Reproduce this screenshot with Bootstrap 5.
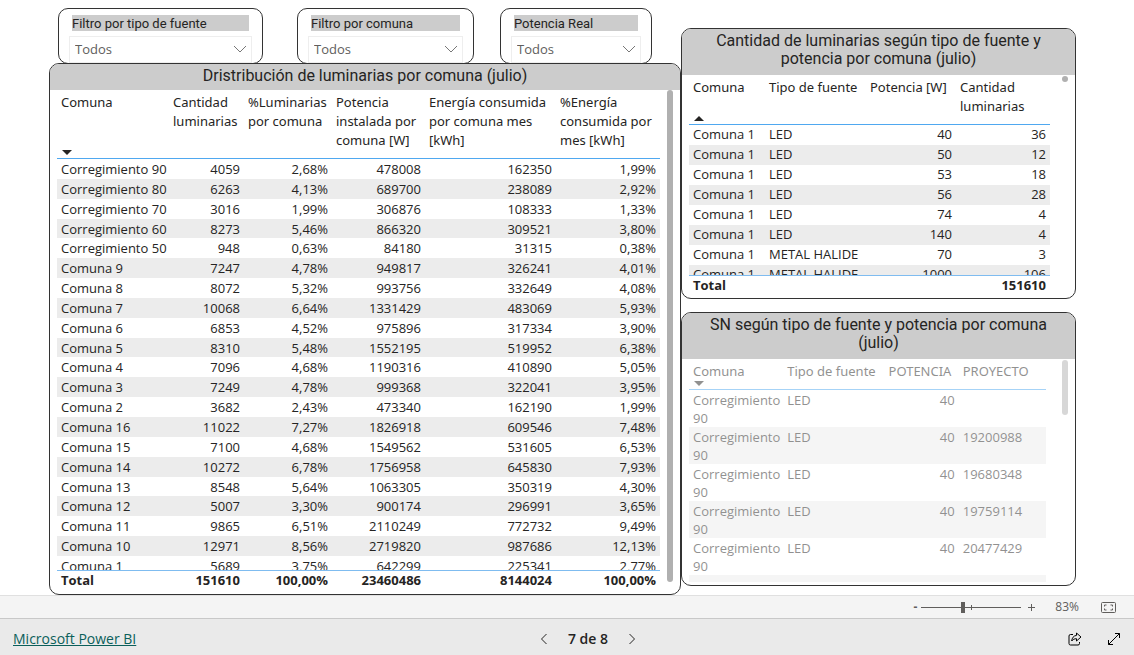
<!DOCTYPE html>
<html lang="es">
<head>
<meta charset="utf-8">
<meta name="viewport" content="width=device-width, initial-scale=1">
<title>Luminarias por comuna</title>
<link href="https://cdn.jsdelivr.net/npm/bootstrap@5.3.0/dist/css/bootstrap.min.css" rel="stylesheet">
<style>
  body { font-family: "Open Sans", "Noto Sans", sans-serif; font-size: 13px; line-height: 20px; color: #252423; background: #fff; }
  .report { padding: 8px 61px 0 49px; min-height: 0; }
  .report-grid { display: grid; grid-template-columns: 8fr 5fr; height: 100%; }
  .report-column { min-height: 0; }
  .filters { padding-left: 9px; padding-right: 27px; }
  .filter { border: 1px solid #333; border-radius: 10px; height: 56px; padding: 6px 10px 0; margin-bottom: -1px; overflow: hidden; }
  .filter-source { flex: 0 1 205px; }
  .filter-area { flex: 0 1 177px; margin-left: 34px; }
  .filter-power { flex: 0 1 152px; margin-left: 26px; }
  .filter label { display: block; margin: 0 3px 5px; padding-top: 1px; background: #ccc; font-family: Roboto, sans-serif; font-size: 13px; line-height: 15px; }
  .filter select { height: 27px; padding: 1px 24px 3px 5px; font-size: 13px; line-height: 20px; color: #605e5c; border: 1px solid #eee; border-radius: 0;
    background-size: 14px 8px; background-position: right 4px top 8px;
    background-image: url("data:image/svg+xml,%3Csvg xmlns='http://www.w3.org/2000/svg' viewBox='0 0 14 8'%3E%3Cpath d='M1 1l6 6 6-6' fill='none' stroke='%23777'/%3E%3C/svg%3E"); }
  .panel { border: 1px solid #333; border-radius: 10px; background: #fff; overflow: hidden; min-height: 0; }
  .panel-title { margin: 0; background: #ccc; font-family: Roboto, sans-serif; font-size: 16px; font-weight: 400; line-height: 18px; text-align: center; white-space: nowrap; }
  .side { padding: 20px 0 9px; gap: 13px; }
  .panel-main .panel-title { padding: 3px 8px 5px; }
  .side .panel-title { padding: 3px 8px 7px; }
  .panel-count { flex: 271 1 0; }
  .panel-sn { flex: 274 1 0; }
  .panel-body { padding: 0 7px 3px; min-height: 0; }
  .panel-main .panel-body { gap: 7px; }
  .panel-count .panel-body { gap: 12px; }
  .panel-sn .panel-body { gap: 16px; opacity: .5; }
  .sheet { min-width: 0; }
  .viewport { overflow: hidden; min-height: 0; flex: 1 1 0; }
  .thumb { width: 6px; border-radius: 3px; background: #b0b0b0; flex: none; }
  .thumb-long { margin-bottom: 9px; }
  .thumb-dot { height: 6px; margin-top: 1px; }
  .thumb-short { height: 55px; margin-top: 1px; }
  .grid-data { table-layout: fixed; width: 100%; border-collapse: separate; border-spacing: 0; }
  .grid-data th, .grid-data td { padding: 0 4px; vertical-align: top; white-space: nowrap; }
  .grid-data thead th { font-family: "Noto Sans", sans-serif; font-weight: 400; line-height: 19px; border-bottom: 1px solid #4fa8f0; position: relative; }
  .grid-data tbody tr:nth-child(even) { background: #ececec; }
  .grid-data tbody td { line-height: 19px; }
  .n { text-align: right; }
  .grid-total { flex: none; }
  .grid-total tr > * { border-top: 1px solid #7fbcf0; font-weight: 700; line-height: 19px; }
  .grid-main { height: 486px; }
  .grid-main thead th { height: 69px; padding-top: 3px; }
  .grid-main tbody td { padding-top: 2px; line-height: 17px; }
  .grid-count thead th { height: 50px; padding-top: 3px; }
  .grid-count tbody tr { height: 20px; }
  .grid-sn thead th { height: 31px; padding-top: 3px; }
  .grid-sn tbody td { height: 37px; padding-top: 1px; line-height: 18px; }
  .grid-sn tbody td:first-child { white-space: normal; }
  .panel-main .sheet { padding-bottom: 1px; }
  .sort { position: absolute; left: 5px; bottom: 3px; border: 5px solid transparent; border-bottom-width: 0; border-top-color: #252423; }
  .sort-up { border-top-width: 0; border-bottom: 5px solid #252423; border-top-color: transparent; }
  .zoombar { height: 23px; background: #f4f4f4; border-top: 1px solid #e0e0e0; padding-right: 18px; color: #605e5c; font-size: 12px; }
  .zoombar button, .status button { background: none; border: 0; padding: 0; color: inherit; line-height: 16px; display: flex; }
  .zoombar input { appearance: none; width: 100px; height: 12px; margin: 0 6px 0 4px;
    background: linear-gradient(#605e5c, #605e5c) 50px 50% / 1px 5px no-repeat, linear-gradient(#605e5c, #605e5c) 0 50% / 100% 1px no-repeat; }
  .zoombar input::-webkit-slider-thumb { appearance: none; width: 4px; height: 11px; background: #605e5c; }
  .zoombar label { margin: 0 22px 0 19px; }
  .status { height: 37px; background: #eaeaea; border-top: 1px solid #c8c8c8; padding: 3px 13px 0; font-size: 14px; }
  .status a { color: #0b5f5a; }
  .status > * { flex: 1 1 0; }
  .pager { font-weight: 600; color: #252423; gap: 20px; padding-left: 42px; }
</style>
</head>
<body class="d-flex flex-column vh-100">
<main class="report flex-fill">
  <div class="report-grid">
    <section class="report-column d-flex flex-column">
      <form class="filters d-flex">
        <div class="filter filter-source"><label for="f1">Filtro por tipo de fuente</label><select class="form-select" id="f1"><option>Todos</option></select></div>
        <div class="filter filter-area"><label for="f2">Filtro por comuna</label><select class="form-select" id="f2"><option>Todos</option></select></div>
        <div class="filter filter-power"><label for="f3">Potencia Real</label><select class="form-select" id="f3"><option>Todos</option></select></div>
      </form>
      <div class="panel panel-main d-flex flex-column flex-fill">
        <h2 class="panel-title">Dristribución de luminarias por comuna (julio)</h2>
        <div class="panel-body d-flex flex-fill">
          <div class="sheet d-flex flex-column flex-fill">
            <div class="viewport">
              <table class="grid-data grid-main">
                <colgroup><col style="width:112px"><col style="width:75px"><col style="width:88px"><col style="width:93px"><col style="width:131px"><col style="width:104px"></colgroup>
                <thead><tr><th>Comuna<span class="sort"></span></th><th>Cantidad<br>luminarias</th><th>%Luminarias<br>por comuna</th><th>Potencia<br>instalada por<br>comuna [W]</th><th>Energía consumida<br>por comuna mes<br>[kWh]</th><th>%Energía<br>consumida por<br>mes [kWh]</th></tr></thead>
                <tbody>
                  <tr><td>Corregimiento 90</td><td class="n">4059</td><td class="n">2,68%</td><td class="n">478008</td><td class="n">162350</td><td class="n">1,99%</td></tr>
                  <tr><td>Corregimiento 80</td><td class="n">6263</td><td class="n">4,13%</td><td class="n">689700</td><td class="n">238089</td><td class="n">2,92%</td></tr>
                  <tr><td>Corregimiento 70</td><td class="n">3016</td><td class="n">1,99%</td><td class="n">306876</td><td class="n">108333</td><td class="n">1,33%</td></tr>
                  <tr><td>Corregimiento 60</td><td class="n">8273</td><td class="n">5,46%</td><td class="n">866320</td><td class="n">309521</td><td class="n">3,80%</td></tr>
                  <tr><td>Corregimiento 50</td><td class="n">948</td><td class="n">0,63%</td><td class="n">84180</td><td class="n">31315</td><td class="n">0,38%</td></tr>
                  <tr><td>Comuna 9</td><td class="n">7247</td><td class="n">4,78%</td><td class="n">949817</td><td class="n">326241</td><td class="n">4,01%</td></tr>
                  <tr><td>Comuna 8</td><td class="n">8072</td><td class="n">5,32%</td><td class="n">993756</td><td class="n">332649</td><td class="n">4,08%</td></tr>
                  <tr><td>Comuna 7</td><td class="n">10068</td><td class="n">6,64%</td><td class="n">1331429</td><td class="n">483069</td><td class="n">5,93%</td></tr>
                  <tr><td>Comuna 6</td><td class="n">6853</td><td class="n">4,52%</td><td class="n">975896</td><td class="n">317334</td><td class="n">3,90%</td></tr>
                  <tr><td>Comuna 5</td><td class="n">8310</td><td class="n">5,48%</td><td class="n">1552195</td><td class="n">519952</td><td class="n">6,38%</td></tr>
                  <tr><td>Comuna 4</td><td class="n">7096</td><td class="n">4,68%</td><td class="n">1190316</td><td class="n">410890</td><td class="n">5,05%</td></tr>
                  <tr><td>Comuna 3</td><td class="n">7249</td><td class="n">4,78%</td><td class="n">999368</td><td class="n">322041</td><td class="n">3,95%</td></tr>
                  <tr><td>Comuna 2</td><td class="n">3682</td><td class="n">2,43%</td><td class="n">473340</td><td class="n">162190</td><td class="n">1,99%</td></tr>
                  <tr><td>Comuna 16</td><td class="n">11022</td><td class="n">7,27%</td><td class="n">1826918</td><td class="n">609546</td><td class="n">7,48%</td></tr>
                  <tr><td>Comuna 15</td><td class="n">7100</td><td class="n">4,68%</td><td class="n">1549562</td><td class="n">531605</td><td class="n">6,53%</td></tr>
                  <tr><td>Comuna 14</td><td class="n">10272</td><td class="n">6,78%</td><td class="n">1756958</td><td class="n">645830</td><td class="n">7,93%</td></tr>
                  <tr><td>Comuna 13</td><td class="n">8548</td><td class="n">5,64%</td><td class="n">1063305</td><td class="n">350319</td><td class="n">4,30%</td></tr>
                  <tr><td>Comuna 12</td><td class="n">5007</td><td class="n">3,30%</td><td class="n">900174</td><td class="n">296991</td><td class="n">3,65%</td></tr>
                  <tr><td>Comuna 11</td><td class="n">9865</td><td class="n">6,51%</td><td class="n">2110249</td><td class="n">772732</td><td class="n">9,49%</td></tr>
                  <tr><td>Comuna 10</td><td class="n">12971</td><td class="n">8,56%</td><td class="n">2719820</td><td class="n">987686</td><td class="n">12,13%</td></tr>
                  <tr><td>Comuna 1</td><td class="n">5689</td><td class="n">3,75%</td><td class="n">642299</td><td class="n">225341</td><td class="n">2,77%</td></tr>
                </tbody>
              </table>
            </div>
            <table class="grid-data grid-total">
              <colgroup><col style="width:112px"><col style="width:75px"><col style="width:88px"><col style="width:93px"><col style="width:131px"><col style="width:104px"></colgroup>
              <tfoot><tr><th scope="row">Total</th><td class="n">151610</td><td class="n">100,00%</td><td class="n">23460486</td><td class="n">8144024</td><td class="n">100,00%</td></tr></tfoot>
            </table>
          </div>
          <div class="thumb thumb-long"></div>
        </div>
      </div>
    </section>

    <section class="report-column side d-flex flex-column">
      <div class="panel panel-count d-flex flex-column">
        <h2 class="panel-title">Cantidad de luminarias según tipo de fuente y<br>potencia por comuna (julio)</h2>
        <div class="panel-body d-flex flex-fill">
          <div class="sheet d-flex flex-column flex-fill">
            <div class="viewport">
              <table class="grid-data grid-count">
                <colgroup><col style="width:76px"><col style="width:101px"><col style="width:90px"><col style="width:94px"></colgroup>
                <thead><tr><th>Comuna<span class="sort sort-up"></span></th><th>Tipo de fuente</th><th>Potencia [W]</th><th>Cantidad<br>luminarias</th></tr></thead>
                <tbody>
                  <tr><td>Comuna 1</td><td>LED</td><td class="n">40</td><td class="n">36</td></tr>
                  <tr><td>Comuna 1</td><td>LED</td><td class="n">50</td><td class="n">12</td></tr>
                  <tr><td>Comuna 1</td><td>LED</td><td class="n">53</td><td class="n">18</td></tr>
                  <tr><td>Comuna 1</td><td>LED</td><td class="n">56</td><td class="n">28</td></tr>
                  <tr><td>Comuna 1</td><td>LED</td><td class="n">74</td><td class="n">4</td></tr>
                  <tr><td>Comuna 1</td><td>LED</td><td class="n">140</td><td class="n">4</td></tr>
                  <tr><td>Comuna 1</td><td>METAL HALIDE</td><td class="n">70</td><td class="n">3</td></tr>
                  <tr><td>Comuna 1</td><td>METAL HALIDE</td><td class="n">1000</td><td class="n">106</td></tr>
                </tbody>
              </table>
            </div>
            <table class="grid-data grid-total">
              <tfoot><tr><th scope="row">Total</th><td class="n">151610</td></tr></tfoot>
            </table>
          </div>
          <div class="thumb thumb-dot"></div>
        </div>
      </div>
      <div class="panel panel-sn d-flex flex-column">
        <h2 class="panel-title">SN según tipo de fuente y potencia por comuna<br>(julio)</h2>
        <div class="panel-body d-flex flex-fill">
          <div class="sheet d-flex flex-column flex-fill">
            <div class="viewport">
              <table class="grid-data grid-sn">
                <colgroup><col style="width:94px"><col style="width:101px"><col style="width:74px"><col style="width:87px"></colgroup>
                <thead><tr><th>Comuna<span class="sort"></span></th><th>Tipo de fuente</th><th>POTENCIA</th><th>PROYECTO</th></tr></thead>
                <tbody>
                  <tr><td>Corregimiento 90</td><td>LED</td><td class="n">40</td><td></td></tr>
                  <tr><td>Corregimiento 90</td><td>LED</td><td class="n">40</td><td>19200988</td></tr>
                  <tr><td>Corregimiento 90</td><td>LED</td><td class="n">40</td><td>19680348</td></tr>
                  <tr><td>Corregimiento 90</td><td>LED</td><td class="n">40</td><td>19759114</td></tr>
                  <tr><td>Corregimiento 90</td><td>LED</td><td class="n">40</td><td>20477429</td></tr>
                  <tr><td></td><td></td><td></td><td></td></tr>
                </tbody>
              </table>
            </div>
          </div>
          <div class="thumb thumb-short"></div>
        </div>
      </div>
    </section>
  </div>
</main>

<div class="zoombar d-flex align-items-center justify-content-end flex-shrink-0">
  <button type="button" class="fw-bold" aria-label="Alejar">-</button>
  <input type="range" id="zoom" min="0" max="100" value="41">
  <button type="button" aria-label="Acercar"><svg width="9" height="9" viewBox="0 0 9 9"><path d="M4.5 1v7M1 4.5h7" stroke="currentColor"/></svg></button>
  <label for="zoom">83%</label>
  <button type="button" aria-label="Ajustar a la página"><svg width="15" height="11" viewBox="0 0 15 11" fill="none" stroke="currentColor"><rect x=".5" y=".5" width="14" height="10" rx="1"/><path d="M3.500 4.500v-1.500h2M9.500 3h2v1.500M3.500 6.500v1.500h2M9.500 8h2v-1.500"/></svg></button>
</div>
<footer class="status d-flex align-items-center flex-shrink-0">
  <div><a href="#">Microsoft Power BI</a></div>
  <nav class="pager d-flex align-items-center justify-content-center" aria-label="Páginas">
    <button type="button" aria-label="Anterior"><svg width="8" height="12" viewBox="0 0 8 12"><path d="M6.500 1L1.500 6l5 5" fill="none" stroke="currentColor"/></svg></button>
    <span>7 de 8</span>
    <button type="button" aria-label="Siguiente"><svg width="8" height="12" viewBox="0 0 8 12"><path d="M1.500 1l5 5-5 5" fill="none" stroke="currentColor"/></svg></button>
  </nav>
  <div class="d-flex justify-content-end align-items-center gap-4">
    <button type="button" aria-label="Compartir"><svg width="15" height="14" viewBox="0 0 15 14" fill="none" stroke="#000" stroke-linejoin="round"><path d="M5 2.500H2.500a1.500 1.500 0 0 0-1.500 1.500v7.500a1.500 1.500 0 0 0 1.500 1.500h7.500a1.500 1.500 0 0 0 1.500-1.500V10"/><path d="M8.500 1l4.500 4-4.500 4V6.700c-2 0-3.500.6-4.800 2.300.3-3 1.800-5.300 4.800-5.600z"/></svg></button>
    <button type="button" aria-label="Pantalla completa"><svg width="14" height="14" viewBox="0 0 14 14" fill="none" stroke="#000"><path d="M1.500 12.500l11-11M8 1.500h4.500V6M1.500 8v4.500H6"/></svg></button>
  </div>
</footer>
<script src="https://cdn.jsdelivr.net/npm/bootstrap@5.3.0/dist/js/bootstrap.bundle.min.js"></script>
</body>
</html>
